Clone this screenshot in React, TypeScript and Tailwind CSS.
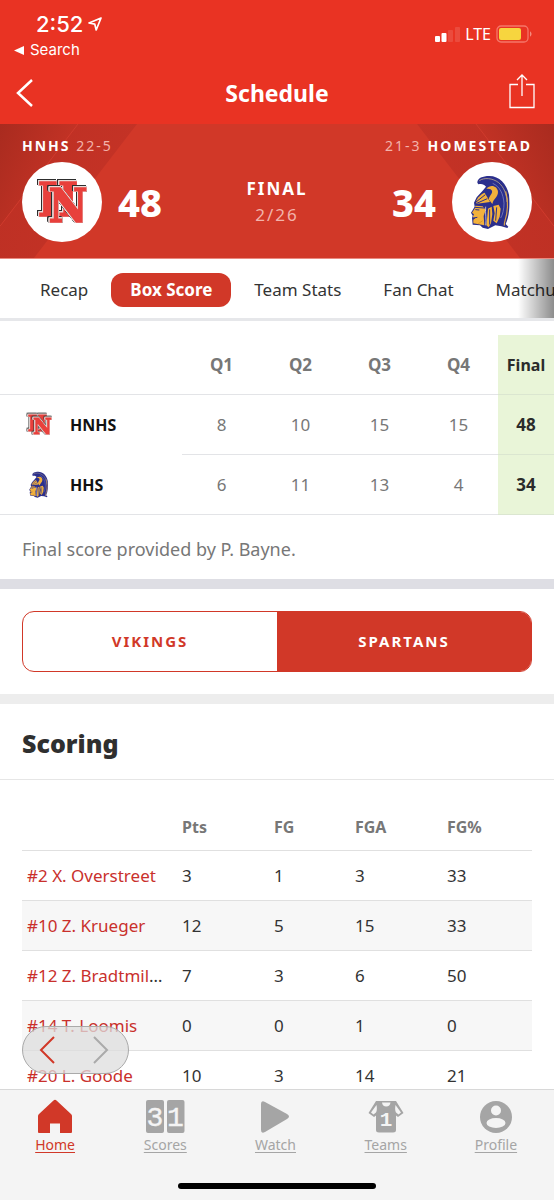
import React from "react";

const quarters = ["Q1", "Q2", "Q3", "Q4"];

const players = [
  { name: "#2 X. Overstreet", pts: 3, fg: 1, fga: 3, pct: 33 },
  { name: "#10 Z. Krueger", pts: 12, fg: 5, fga: 15, pct: 33 },
  { name: "#12 Z. Bradtmiller", pts: 7, fg: 3, fga: 6, pct: 50 },
  { name: "#14 T. Loomis", pts: 0, fg: 0, fga: 1, pct: 0 },
  { name: "#20 L. Goode", pts: 10, fg: 3, fga: 14, pct: 21 },
];

function VikingsLogo({ className }: { className: string }) {
  const outlined =
    "[filter:drop-shadow(0.6px_0_0_#e6dcda)_drop-shadow(-0.6px_0_0_#e6dcda)_drop-shadow(0_0.6px_0_#e6dcda)_drop-shadow(0_-0.6px_0_#e6dcda)_drop-shadow(0.7px_0.7px_0_#2d2d2d)_drop-shadow(-0.7px_-0.7px_0_#2d2d2d)]";
  return (
    <svg
      viewBox="0 0 80 80"
      className={className}
      aria-hidden="true"
      fontFamily='"DejaVu Serif Condensed", "DejaVu Serif", serif'
      fontWeight={700}
      fontSize={47}
      textAnchor="middle"
      fill="#e8403c"
      stroke="#e8403c"
      strokeWidth={1.6}
    >
      <text x="36" y="54" className={outlined}>H</text>
      <text x="46" y="60" className={outlined}>N</text>
    </svg>
  );
}

function SpartansLogo({ className }: { className: string }) {
  return (
    <svg viewBox="0 0 240 240" className={className} aria-hidden="true">
      <path
        d="M76 62 C76 48 92 42 112 42 C142 42 164 66 171 98 C174 130 172 165 161 186 L169 194 L166 198 L148 193 L130 190 L108 201 L92 197 L84 190 L62 188 L60 168 L62 161 L57 152 L68 134 L66 122 L74 106 L92 86 L102 74 C96 66 88 64 79 67 Z"
        fill="#2b2f8c"
      />
      <path d="M82 56 C96 46 122 48 140 62 C156 76 164 96 165 120" fill="none" stroke="#b9a98e" strokeWidth="2.5" />
      <path d="M161 88 C170 116 167 154 159 176 C157 182 156 186 157 191" fill="none" stroke="#dfa64c" strokeWidth="3.5" />
      <path d="M122 64 C144 74 154 96 156 124 C156 142 152 158 146 168" fill="none" stroke="#8e92c8" strokeWidth="2" />
      <path d="M70 131 L92 133 L101 144 L95 162 L97 190 L64 184 L64 173 L70 169 L62 166 L66 157 L60 152 L68 140 Z" fill="#f2b13c" />
      <path d="M72 119 C76 106 88 96 98 92 L106 106 L114 120 L98 122 L74 125 Z" fill="#f2b13c" />
      <path d="M72 120 L100 98 M74 124 L106 110" fill="none" stroke="#2b2f8c" strokeWidth="3" />
      <path d="M103 80 C116 66 137 72 138 90 C138 106 124 110 121 126 L110 112 C113 99 124 94 119 85 C115 79 109 81 103 80 Z" fill="#f2b13c" />
      <path d="M124 132 L140 128 L146 140 L143 164 L134 184 L124 176 L128 154 Z" fill="#f2b13c" />
      <path d="M108 140 L119 134 L121 156 L117 184 L110 196 L103 190 L106 162 Z" fill="#f2b13c" />
      <path d="M113 142 L113 188 M134 136 L131 176" fill="none" stroke="#2b2f8c" strokeWidth="3" />
      <path d="M68 136 L96 138 M64 168 L76 166 M70 143 L82 144" fill="none" stroke="#2b2f8c" strokeWidth="3" />
      <path d="M78 186 L92 176" fill="none" stroke="#c98a2c" strokeWidth="2" />
      <path d="M101 134 C99 154 104 172 101 190" fill="none" stroke="#eef1f8" strokeWidth="2" />
    </svg>
  );
}

function StatusBar() {
  return (
    <div className="flex h-16 items-start justify-between font-['Inter',sans-serif]">
      <div className="pt-[11px] pl-[14px]">
        <div className="flex items-center gap-[5px] pl-[22px] text-[22px] leading-[26px] font-medium">
          2:52
          <svg viewBox="0 0 14 14" className="size-[14px]" fill="none" stroke="currentColor" strokeWidth="1.7" strokeLinejoin="round" aria-hidden="true">
            <path d="M13 1 L1 6 L6.8 7.2 L8.2 13 Z" />
          </svg>
        </div>
        <div className="flex items-center gap-[6px] text-[15px] leading-[26px]">
          <svg viewBox="0 0 10 9" className="h-[9px] w-[10px]" fill="currentColor" aria-hidden="true">
            <path d="M0 4.5 L10 0 V9 Z" />
          </svg>
          Search
        </div>
      </div>
      <div className="flex items-center gap-[5px] pt-[22px] pr-[22px]">
        <svg viewBox="0 0 25 16" className="h-4 w-[25px]" fill="currentColor" aria-hidden="true">
          <rect x="0" y="10" width="5" height="6" rx="1" />
          <rect x="6.5" y="7" width="5" height="9" rx="1" />
          <rect x="13" y="4" width="5" height="12" rx="1" opacity=".12" />
          <rect x="20" y="1" width="5" height="15" rx="1" opacity=".12" />
        </svg>
        <span className="font-['Noto_Sans',sans-serif] text-base leading-6">LTE</span>
        <svg viewBox="0 0 36 18" className="h-[18px] w-9" aria-hidden="true">
          <rect x="1" y="1" width="31" height="16" rx="4" fill="none" stroke="#f5776a" strokeWidth="1.3" />
          <rect x="3" y="3" width="22" height="12" rx="2" fill="#f7d53f" />
          <path d="M34 6.5 C36 7 36 11 34 11.500 Z" fill="#f5897d" />
        </svg>
      </div>
    </div>
  );
}

function CornerShade({ className, id }: { className: string; id: string }) {
  return (
    <svg viewBox="0 0 140 135" preserveAspectRatio="none" className={className} aria-hidden="true">
      <defs>
        <linearGradient id={id + "a"} x1="0" y1="0" x2="1" y2="0.6">
          <stop offset="0" stopColor="#a92b1f" />
          <stop offset="1" stopColor="#cb3527" />
        </linearGradient>
        <linearGradient id={id + "b"} x1="0" y1="0.3" x2="1" y2="0.7">
          <stop offset="0" stopColor="#bd3024" />
          <stop offset="1" stopColor="#c63326" />
        </linearGradient>
      </defs>
      <path d="M0 0 H137 L34 135 H0 Z" fill={`url(#${id}b)`} />
      <path d="M0 0 H78 L0 103 Z" fill={`url(#${id}a)`} />
      <path d="M78 0 L0 103" stroke="#d03b2d" strokeWidth="1" />
    </svg>
  );
}

function Scoreboard() {
  return (
    <section className="relative isolate flex h-[135px] flex-col border-b border-[#e98a80] bg-[#d13828] px-[22px]">
      <CornerShade id="l" className="absolute top-0 left-0 -z-10 h-full w-[140px]" />
      <CornerShade id="r" className="absolute top-0 right-0 -z-10 h-full w-[140px] -scale-x-100" />
      <div className="flex justify-between pt-3 text-sm leading-5 tracking-[2px] text-[#f3b3ab]">
        <span><b className="text-white">HNHS</b> 22-5</span>
        <span className="flex gap-[6px]"><span>21-3</span> <b className="text-white">HOMESTEAD</b></span>
      </div>
      <div className="flex items-center justify-between pt-[6px]">
        <div className="flex items-center gap-4">
          <div className="size-20 rounded-full bg-white">
            <VikingsLogo className="size-20" />
          </div>
          <span className="text-[38px] leading-10 font-extrabold">48</span>
        </div>
        <div className="text-center text-[17px] leading-[26px] tracking-[2px]">
          <div className="font-bold">FINAL</div>
          <div className="text-[#f3b3ab]">2/26</div>
        </div>
        <div className="flex items-center gap-4">
          <span className="text-[38px] leading-10 font-extrabold">34</span>
          <div className="size-20 rounded-full bg-white">
            <SpartansLogo className="size-20" />
          </div>
        </div>
      </div>
    </section>
  );
}

function Tabs() {
  const tabs = ["Recap", "Box Score", "Team Stats", "Fan Chat", "Matchup"];
  return (
    <nav className="relative flex h-[62px] items-center gap-1 overflow-hidden border-b-[3px] border-[#e6e7ea] pt-[3px] pl-[21px] text-[17px]">
      {tabs.map((t) => (
        <button
          key={t}
          className={
            t === "Box Score"
              ? "h-[34px] shrink-0 rounded-xl bg-[#d13828] px-[19px] font-bold text-white"
              : "h-[34px] shrink-0 px-[19px] text-[#333]"
          }
        >
          {t}
        </button>
      ))}
      <div className="absolute inset-y-0 right-0 w-9 bg-linear-to-r from-transparent to-black/45" />
    </nav>
  );
}

function LineScore() {
  const rows = [
    { team: "HNHS", logo: <VikingsLogo className="size-[39px]" />, q: [8, 10, 15, 15], final: 48 },
    { team: "HHS", logo: <SpartansLogo className="size-[39px]" />, q: [6, 11, 13, 4], final: 34 },
  ];
  return (
    <table className="mt-[14px] w-full table-fixed border-separate border-spacing-0 text-center text-[17px] text-[#777]">
      <colgroup>
        <col className="w-[182px]" />
        <col /><col /><col /><col />
        <col className="w-14" />
      </colgroup>
      <thead>
        <tr className="h-[60px]">
          <td className="border-b border-[#e3e4e7]" />
          {quarters.map((q) => (
            <th key={q} scope="col" className="border-b border-[#e3e4e7] font-bold">{q}</th>
          ))}
          <th scope="col" className="border-b border-[#dbe6d0] bg-[#e9f5d8] text-base font-bold text-[#2b2b2b]">Final</th>
        </tr>
      </thead>
      <tbody>
        {rows.map((r, i) => (
          <tr key={r.team} className="h-[60px]">
            <th scope="row" className={i === 1 ? "border-b border-[#e3e4e7] pl-5" : "border-b border-transparent pl-5"}>
              <div className="flex items-center gap-[11px] text-base font-bold text-[#111]">
                {r.logo}
                {r.team}
              </div>
            </th>
            {r.q.map((n, k) => (
              <td key={k} className="border-b border-[#e3e4e7]">{n}</td>
            ))}
            <td className="border-b border-[#dbe6d0] bg-[#e9f5d8] font-bold text-[#2b2b2b]">{r.final}</td>
          </tr>
        ))}
      </tbody>
    </table>
  );
}

function ScoringTable() {
  return (
    <div className="px-[22px]">
      <table className="w-full table-fixed border-separate border-spacing-0 text-left text-[17px] text-[#333]">
        <colgroup>
          <col className="w-[155px]" />
          <col className="w-[92px]" />
          <col className="w-[81px]" />
          <col className="w-[92px]" />
          <col />
        </colgroup>
        <thead>
          <tr className="h-[71px] text-base text-[#777]">
            <td className="border-b border-[#e0e0e0]" />
            {["Pts", "FG", "FGA", "FG%"].map((h) => (
              <th key={h} scope="col" className="border-b border-[#e0e0e0] px-[5px] pt-6 font-bold">{h}</th>
            ))}
          </tr>
        </thead>
        <tbody>
          {players.map((p) => (
            <tr key={p.name} className="h-[50px] even:bg-[#f7f7f7]">
              <td className="truncate border-b border-[#e0e0e0] pr-[14px] pl-[5px]">
                <a href="#player" className="text-[#c9302c]">{p.name}</a>
              </td>
              <td className="border-b border-[#e0e0e0] px-[5px]">{p.pts}</td>
              <td className="border-b border-[#e0e0e0] px-[5px]">{p.fg}</td>
              <td className="border-b border-[#e0e0e0] px-[5px]">{p.fga}</td>
              <td className="border-b border-[#e0e0e0] px-[5px]">{p.pct}</td>
            </tr>
          ))}
        </tbody>
      </table>
    </div>
  );
}

function Pager() {
  return (
    <div className="absolute bottom-[15px] left-[22px] flex h-12 w-[107px] items-center justify-between rounded-full border border-[#aaa] bg-[#dedede]/75 px-4">
      <button aria-label="Previous" className="text-[#d13828]">
        <svg viewBox="0 0 16 28" className="h-7 w-4" fill="none" stroke="currentColor" strokeWidth="2"><path d="M15 1 L2 14 L15 27" /></svg>
      </button>
      <button aria-label="Next" className="text-[#aaa]">
        <svg viewBox="0 0 16 28" className="mr-[3px] h-7 w-4" fill="none" stroke="currentColor" strokeWidth="2"><path d="M1 1 L14 14 L1 27" /></svg>
      </button>
    </div>
  );
}

const navItems = [
  {
    label: "Home",
    icon: (
      <path d="M16.500 1.500 Q18 0 19.500 1.500 L34 15 Q35 16 35 17 V33 Q35 34 34 34 H23 V24.500 H13 V34 H2 Q1 34 1 33 V17 Q1 16 2 15 Z" />
    ),
  },
  {
    label: "Scores",
    icon: (
      <>
        <rect x="-1" y="1" width="18" height="33" rx="2" />
        <rect x="20" y="1" width="17.500" height="33" rx="2" />
        <g fill="#f4f4f4" stroke="#f4f4f4" strokeWidth=".4" fontFamily='"Liberation Mono", monospace' fontSize="28" textAnchor="middle">
          <text x="8" y="27">3</text>
          <text x="28.500" y="27">1</text>
        </g>
      </>
    ),
  },
  {
    label: "Watch",
    icon: <path d="M4 5 Q4 1 8 3 L30 15 Q34 17.500 30 20 L8 33 Q4 35 4 31 Z" />,
  },
  {
    label: "Teams",
    icon: (
      <>
        <path d="M8 2 H28 L35.500 14 L30 18 L28 16.500 V31 Q28 33.500 25 33.500 H11 Q8 33.500 8 31 V16.500 L6 18 L0.500 14 Z" />
        <path d="M14 3.500 H22.500 Q22 7.500 18.200 7.500 Q14.500 7.500 14 3.500 Z M8.500 6 Q9.500 11 8 13.500 L5.500 15.500 L3 13.500 Z M27.500 6 Q26.500 11 28 13.500 L30.500 15.500 L33 13.500 Z" fill="#f4f4f4" />
        <text x="18" y="26.500" fill="#f4f4f4" fontFamily='"Liberation Mono", monospace' fontWeight="700" fontSize="21" textAnchor="middle">1</text>
      </>
    ),
  },
  {
    label: "Profile",
    icon: (
      <>
        <circle cx="18" cy="18" r="16" />
        <circle cx="18" cy="11.500" r="5" fill="#f4f4f4" />
        <ellipse cx="18" cy="24" rx="9.500" ry="5" fill="#f4f4f4" />
      </>
    ),
  },
];

function BottomNav() {
  return (
    <footer className="flex h-[111px] shrink-0 flex-col justify-between border-t border-[#d8d8d8] bg-[#f4f4f4] pb-[11px]">
      <nav className="grid grid-cols-5 pt-[9px] pr-[3px]">
        {navItems.map((n) => (
          <a
            key={n.label}
            href={"#" + n.label.toLowerCase()}
            className={
              n.label === "Home"
                ? "flex flex-col items-center text-sm leading-5 text-[#d13828] underline underline-offset-2"
                : "flex flex-col items-center text-sm leading-5 text-[#a5a5a5] underline underline-offset-2"
            }
          >
            <svg viewBox="0 0 36 36" className="size-9 overflow-visible" fill="currentColor" aria-hidden="true">{n.icon}</svg>
            {n.label}
          </a>
        ))}
      </nav>
      <div className="mx-auto h-[6px] w-[198px] rounded-full bg-black" />
    </footer>
  );
}

export default function App() {
  return (
    <div className="flex h-screen flex-col bg-white font-['Noto_Sans',sans-serif] text-white">
      <header className="h-[124px] shrink-0 bg-[#e93323]">
        <StatusBar />
        <div className="flex h-[58px] items-center justify-between px-4">
          <button aria-label="Back" className="w-8">
            <svg viewBox="0 0 18 28" className="h-7 w-[18px]" fill="none" stroke="currentColor" strokeWidth="2.5" aria-hidden="true"><path d="M16 1 L2 14 L16 27" /></svg>
          </button>
          <h1 className="text-[23px] leading-8 font-bold">Schedule</h1>
          <button aria-label="Share" className="flex w-8 justify-end pb-1">
            <svg viewBox="0 0 28 36" className="mr-[2px] h-9 w-7" fill="none" stroke="currentColor" strokeWidth="1.300" aria-hidden="true">
              <path d="M10 11.500 H2 V34.500 H26 V11.500 H18 M14 23 V2 M9 7 L14 2 L19 7" />
            </svg>
          </button>
        </div>
      </header>
      <main className="relative min-h-0 flex-1 overflow-hidden">
        <Scoreboard />
        <Tabs />
        <LineScore />
        <p className="border-b-[10px] border-[#dedee4] px-[22px] pt-[18px] pb-[14px] text-[18px] leading-8 text-[#777]">
          Final score provided by P. Bayne.
        </p>
        <div className="border-b-[10px] border-[#ededed] px-[22px] py-[22px]">
          <div className="grid h-[61px] grid-cols-2 overflow-hidden rounded-xl border border-[#d13828] text-[15px] font-bold tracking-[2px]">
            <button className="text-[#d13828]">VIKINGS</button>
            <button className="bg-[#d13828]">SPARTANS</button>
          </div>
        </div>
        <h2 className="border-b border-[#e6e6e6] px-[22px] pt-[23px] pb-5 text-[25px] leading-8 font-black text-[#2f2f2f]">Scoring</h2>
        <ScoringTable />
        <Pager />
      </main>
      <BottomNav />
    </div>
  );
}
